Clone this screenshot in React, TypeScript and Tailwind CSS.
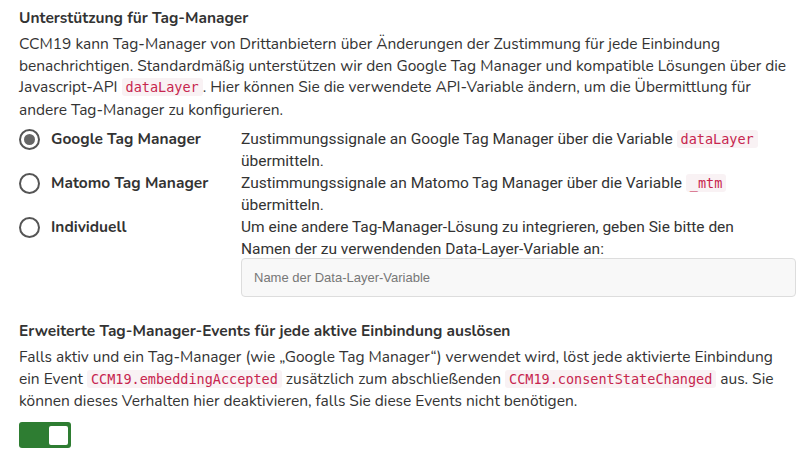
import React, { useState } from 'react';

const Code = ({ children }: { children: React.ReactNode }) => (
  <code className="rounded-[3px] bg-[#f9f2f4] px-[4px] py-[1px] font-['DejaVu_Sans_Mono','Liberation_Mono',monospace] text-[13.5px] text-[#c7254e]">
    {children}
  </code>
);

interface Option {
  id: string;
  label: string;
  desc: React.ReactNode;
}

const options: Option[] = [
  {
    id: 'gtm',
    label: 'Google Tag Manager',
    desc: (
      <>
        Zustimmungssignale an Google Tag Manager über die Variable <Code>dataLayer</Code> übermitteln.
      </>
    ),
  },
  {
    id: 'mtm',
    label: 'Matomo Tag Manager',
    desc: (
      <>
        Zustimmungssignale an Matomo Tag Manager über die Variable <Code>_mtm</Code> übermitteln.
      </>
    ),
  },
  {
    id: 'custom',
    label: 'Individuell',
    desc: <>Um eine andere Tag-Manager-Lösung zu integrieren, geben Sie bitte den Namen der zu verwendenden Data-Layer-Variable an:</>,
  },
];

export default function App() {
  const [selected, setSelected] = useState('gtm');
  const [events, setEvents] = useState(true);

  return (
    <div className="min-h-screen bg-white pl-[19px] pr-[14px] pt-[7px] font-['Nunito','Lato',sans-serif] text-[15.5px] leading-[21.5px] text-[#333]">
      {/* Tag manager support */}
      <h3 className="mb-[4px] font-bold leading-[22px]">Unterstützung für Tag-Manager</h3>
      <p className="mb-[8px]">
        CCM19 kann Tag-Manager von Drittanbietern über Änderungen der Zustimmung für jede Einbindung benachrichtigen.
        Standardmäßig unterstützen wir den Google Tag Manager und kompatible Lösungen über die Javascript-API{' '}
        <Code>dataLayer</Code>. Hier können Sie die verwendete API-Variable ändern, um die Übermittlung für andere
        Tag-Manager zu konfigurieren.
      </p>

      <div className="flex flex-col">
        {options.map((opt) => (
          <div key={opt.id} className="flex items-start">
            <label className="flex w-[222px] shrink-0 cursor-pointer items-center gap-[11px]" onClick={() => setSelected(opt.id)}>
              <span className="flex h-[21px] w-[21px] items-center justify-center rounded-full border-2 border-[#555]">
                {selected === opt.id && <span className="h-[11px] w-[11px] rounded-full bg-[#666]" />}
              </span>
              <span className="font-bold leading-[22px]">{opt.label}</span>
            </label>
            <div className="flex-1 font-['Roboto',sans-serif] text-[15.5px] leading-[22px] text-[#333]">
              <p className="pr-[14px]">{opt.desc}</p>
              {opt.id === 'custom' && (
                <input
                  type="text"
                  placeholder="Name der Data-Layer-Variable"
                  className="-mt-[2px] block h-[39px] w-full rounded-[4px] border border-[#ddd] bg-[#f8f8f8] px-[12px] font-['Liberation_Sans',sans-serif] text-[13px] text-[#333] placeholder:text-[#777] focus:outline-none"
                />
              )}
            </div>
          </div>
        ))}
      </div>

      {/* Extended events */}
      <h3 className="mb-[4px] mt-[23px] font-bold leading-[22px]">Erweiterte Tag-Manager-Events für jede aktive Einbindung auslösen</h3>
      <p className="leading-[22px]">
        Falls aktiv und ein Tag-Manager (wie „Google Tag Manager“) verwendet wird, löst jede aktivierte Einbindung ein
        Event <Code>CCM19.embeddingAccepted</Code> zusätzlich zum abschließenden <Code>CCM19.consentStateChanged</Code>{' '}
        aus. Sie können dieses Verhalten hier deaktivieren, falls Sie diese Events nicht benötigen.
      </p>

      <button
        type="button"
        onClick={() => setEvents(!events)}
        className={`mt-[10px] flex h-[26px] w-[52px] items-center rounded-[3px] p-[3px] ${
          events ? 'justify-end bg-[#2e7d32]' : 'justify-start bg-[#ccc]'
        }`}
      >
        <span className="h-[19px] w-[19px] rounded-[2px] bg-white" />
      </button>
    </div>
  );
}
